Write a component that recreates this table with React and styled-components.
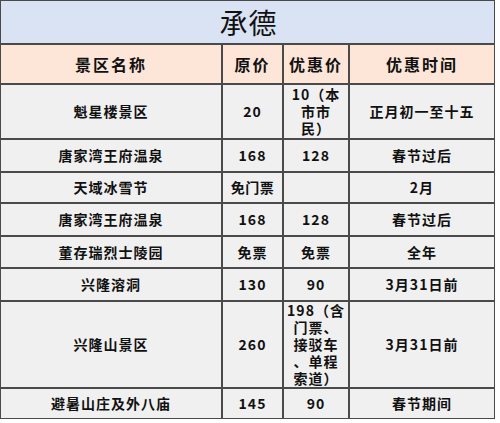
import React from "react";
import styled, { createGlobalStyle } from "styled-components";

const Global = createGlobalStyle`
  html, body { margin: 0; padding: 0; background: #ffffff; }
  body { font-family: "Noto Sans CJK SC", "Noto Sans", sans-serif; }
`;

const Sheet = styled.div`
  display: grid;
  width: 495px;
  box-sizing: border-box;
  border: 1px solid #4a4a4a;
  background: #4a4a4a;
  gap: 2px;
  grid-template-columns: 220px 59px 64px 144px;
  grid-template-rows: 42px 38px 53px 31px 29px 31px 30px 31px 85px 29px;
`;

const Title = styled.div`
  grid-column: 1 / -1;
  background: #dae3f3;
  display: flex;
  align-items: center;
  justify-content: center;
  font-size: 28px;
  font-weight: 400;
  color: #111;
  letter-spacing: 1px;
  padding-left: 2px;
`;

const Head = styled.div`
  background: #fde5d7;
  display: flex;
  align-items: center;
  justify-content: center;
  font-size: 16px;
  font-weight: 700;
  letter-spacing: 2px;
  color: #111;
`;

const Cell = styled.div`
  background: #f0f0f0;
  display: flex;
  flex-direction: column;
  align-items: center;
  justify-content: center;
  overflow: hidden;
  font-size: 14px;
  font-weight: 700;
  letter-spacing: ${(p) => (p.$tight ? "0.5px" : "1px")};
  line-height: 17px;
  color: #111;
  text-align: center;
  white-space: nowrap;
`;

const Line = styled.span`
  display: block;
`;

const headers = ["景区名称", "原价", "优惠价", "优惠时间"];

const rows = [
  ["魁星楼景区", "20", ["10（本", "市市", "民）"], "正月初一至十五"],
  ["唐家湾王府温泉", "168", "128", "春节过后"],
  ["天域冰雪节", "免门票", "", "2月"],
  ["唐家湾王府温泉", "168", "128", "春节过后"],
  ["董存瑞烈士陵园", "免票", "免票", "全年"],
  ["兴隆溶洞", "130", "90", "3月31日前"],
  ["兴隆山景区", "260", ["198（含", "门票、", "接驳车", "、单程", "索道）"], "3月31日前"],
  ["避暑山庄及外八庙", "145", "90", "春节期间"],
];

function Content({ value }) {
  if (Array.isArray(value)) {
    return value.map((l, i) => <Line key={i}>{l}</Line>);
  }
  return value;
}

export default function App() {
  return (
    <>
      <Global />
      <Sheet>
        <Title>承德</Title>
        {headers.map((h) => (
          <Head key={h}>{h}</Head>
        ))}
        {rows.map((r, ri) =>
          r.map((v, ci) => (
            <Cell key={`${ri}-${ci}`} $tight={ci === 1 && v === "免门票"}>
              <Content value={v} />
            </Cell>
          ))
        )}
      </Sheet>
    </>
  );
}
